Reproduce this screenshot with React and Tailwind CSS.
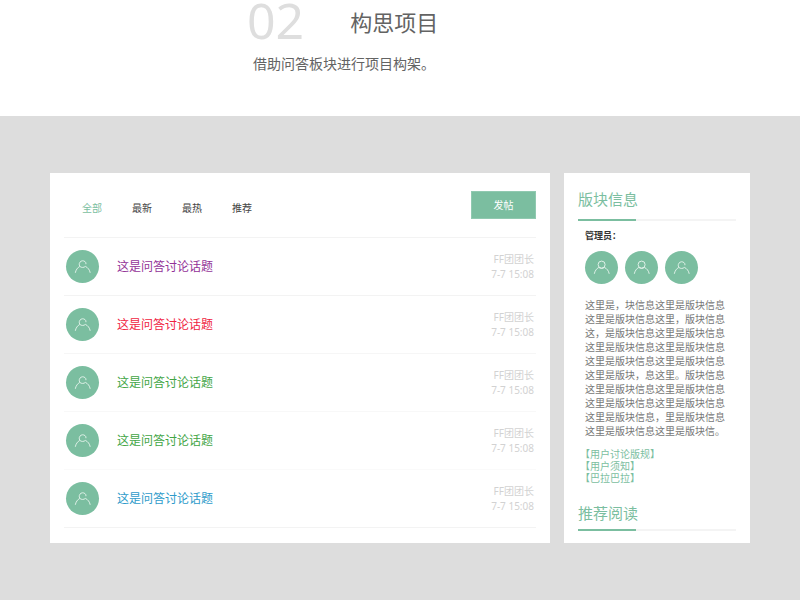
const topics = [
  { id: 1, title: "这是问答讨论话题", color: "text-[#933398]", line: "border-[#f3f3f3]" },
  { id: 2, title: "这是问答讨论话题", color: "text-[#f0243f]", line: "border-[#f6f6f6]" },
  { id: 3, title: "这是问答讨论话题", color: "text-[#42a545]", line: "border-[#f8f8f8]" },
  { id: 4, title: "这是问答讨论话题", color: "text-[#42a545]", line: "border-[#fafafa]" },
  { id: 5, title: "这是问答讨论话题", color: "text-[#2e9bca]", line: "border-[#f3f3f3]" },
];

const tabs = ["全部", "最新", "最热", "推荐"];

const infoLines = [
  "这里是，块信息这里是版块信息",
  "这里是版块信息这里，版块信息",
  "这，是版块信息这里是版块信息",
  "这里是版块信息这里是版块信息",
  "这里是版块信息这里是版块信息",
  "这里是版块，息这里。版块信息",
  "这里是版块信息这里是版块信息",
  "这里是版块信息这里是版块信息",
  "这里是版块信息，里是版块信息",
  "这里是版块信息这里是版块信。",
];

const links = ["【用户讨论版规】", "【用户须知】", "【巴拉巴拉】"];

function Avatar({ open = false }) {
  return (
    <span className="flex size-[33px] shrink-0 items-center justify-center rounded-full bg-[#7bbea0]">
      <svg viewBox="0 0 33 33" className="size-[33px]" fill="none" stroke="#e6f4ed" strokeWidth="0.9">
        {open ? (
          <path d="M19.9 12.8A3.5 3.5 0 1 0 13.8 16.2M19.9 12.8V14.2" />
        ) : (
          <circle cx="16.6" cy="13.6" r="3.5" />
        )}
        <path d="M9.3 22.8C9.9 19.9 11.5 17.6 13.8 16.4C15.4 17.8 17.8 17.8 19.4 16.4C21.9 17.6 23.7 19.9 24.2 22.8" />
      </svg>
    </span>
  );
}

function SideTitle({ children, tight = false }) {
  return (
    <h2 className="flex border-b-2 border-[#f4f4f4] text-[15px] leading-[20px] text-[#7bbea0]">
      <span
        className={`-mb-[2px] w-[58px] whitespace-nowrap border-b-2 border-[#7bbea0] ${tight ? "pb-[6px]" : "pb-[10px]"}`}
      >
        {children}
      </span>
    </h2>
  );
}

export default function App() {
  return (
    <div className="flex min-h-screen flex-col bg-white font-['Noto_Sans','Noto_Sans_CJK_SC',sans-serif] text-[10px]" lang="zh-CN">
      <header className="h-[116px] pl-[247px] text-[#636363]">
        <div className="flex h-[44px] items-start gap-[46px]">
          <span className="text-[50px] leading-[40px] text-[#dedede]">02</span>
          <h1 className="text-[22px] leading-[44px]">构思项目</h1>
        </div>
        <p className="ml-[6px] mt-[10px] text-[14px] leading-[20px]">借助问答板块进行项目构架。</p>
      </header>

      <main className="flex grow items-start bg-[#dddddd] px-[50px] py-[57px]">
        <div className="flex grow gap-[14px]">
          <section className="grow bg-white px-[14px] pb-[15px]">
            <div className="flex h-[65px] items-start justify-between border-b border-[#f3f3f3]">
              <nav className="flex gap-[30px] pl-[18px] pt-[28px] leading-[14px]">
                {tabs.map((tab, i) => (
                  <a key={tab} href="#" className={i === 0 ? "text-[#7bbea0]" : "text-[#444444]"}>
                    {tab}
                  </a>
                ))}
              </nav>
              <button type="button" className="mt-[18px] h-[28px] w-[65px] border border-[#90c9b0] bg-[#7bbea0] text-white">
                发帖
              </button>
            </div>
            <ul>
              {topics.map((t) => (
                <li key={t.id} className={`flex h-[58px] items-center border-b px-[2px] ${t.line}`}>
                  <Avatar open />
                  <a href="#" className={`ml-[18px] grow text-[12px] leading-[16px] ${t.color}`}>
                    {t.title}
                  </a>
                  <div className="text-right leading-[15px] text-[#d2d2d2]">
                    <p>FF团团长</p>
                    <p>7-7 15:08</p>
                  </div>
                </li>
              ))}
            </ul>
          </section>

          <aside className="w-[186px] shrink-0 bg-white px-[14px] pb-[12px] pt-[16px]">
            <SideTitle>版块信息</SideTitle>
            <div className="pl-[7px]">
              <p className="mt-[9px] text-[9px] font-bold leading-[12px] text-[#333333]">管理员：</p>
              <div className="mt-[9px] flex gap-[7px]">
                <Avatar />
                <Avatar />
                <Avatar open />
              </div>
              <p className="mt-[14px] leading-[14px] text-[#777777]">
                {infoLines.map((line, i) => (
                  <span key={i} className="block whitespace-nowrap">
                    {line}
                  </span>
                ))}
              </p>
            </div>
            <ul className="mb-[19px] mt-[10px] pl-[2px] leading-[12px] text-[#7bbea0]">
              {links.map((link) => (
                <li key={link}>
                  <a href="#">{link}</a>
                </li>
              ))}
            </ul>
            <SideTitle tight>推荐阅读</SideTitle>
          </aside>
        </div>
      </main>
    </div>
  );
}
